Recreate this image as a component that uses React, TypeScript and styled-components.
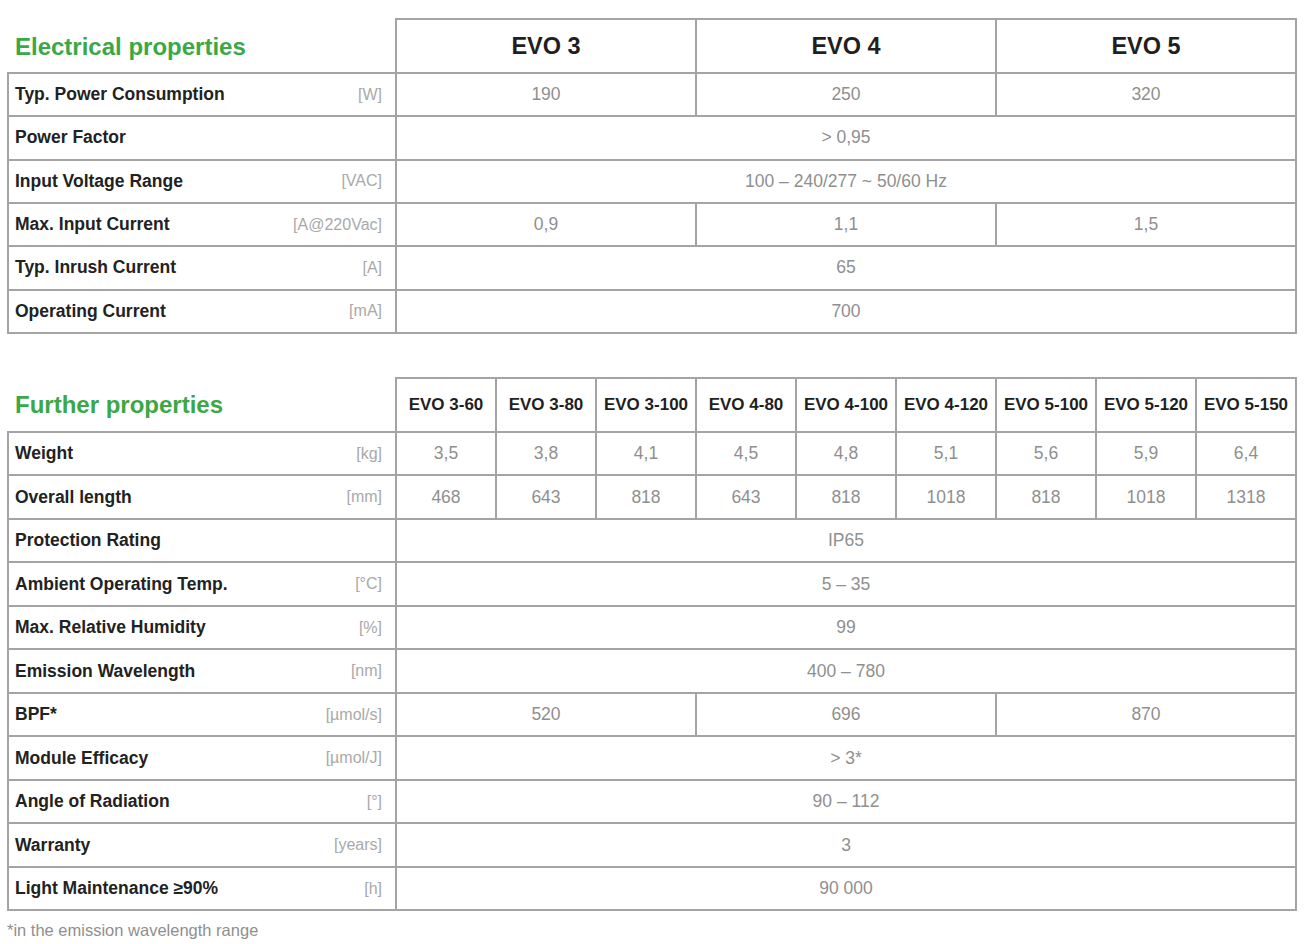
import React from "react";
import styled, { createGlobalStyle } from "styled-components";

const Global = createGlobalStyle`
  html, body { margin: 0; padding: 0; background: #ffffff; }
  body { font-family: "Liberation Sans", Arial, Helvetica, sans-serif; }
`;

const Page = styled.div`
  padding: 18px 0 0 7px;
  width: 1291px;
  display: flex;
  flex-direction: column;
`;

const Table = styled.table<{ $gap?: number }>`
  width: 1290px;
  table-layout: fixed;
  border-collapse: collapse;
  margin-top: ${(p) => p.$gap ?? 0}px;
`;

const HeadRow = styled.tr`
  height: 54px;
`;

const BodyRow = styled.tr<{ $h: number }>`
  height: ${(p) => p.$h}px;
`;

const Title = styled.th`
  border: none;
  text-align: left;
  padding: 2px 0 0 7px;
  font-size: 24px;
  font-weight: 700;
  color: #3ba846;
  vertical-align: middle;
  white-space: nowrap;
`;

const ColHead = styled.th<{ $small?: boolean }>`
  border: 2px solid #a4a4a4;
  text-align: center;
  vertical-align: middle;
  padding: 0;
  font-size: ${(p) => (p.$small ? 17 : 23.5)}px;
  font-weight: 700;
  color: #1f1f1f;
  white-space: nowrap;
`;

const LabelCell = styled.td`
  border: 2px solid #a4a4a4;
  padding: 0 13px 0 6px;
  vertical-align: middle;
`;

const LabelInner = styled.div`
  display: flex;
  justify-content: space-between;
  align-items: center;
`;

const Label = styled.span`
  font-size: 17.5px;
  font-weight: 700;
  color: #222222;
`;

const Unit = styled.span`
  font-size: 16px;
  color: #a9a9a9;
`;

const Value = styled.td`
  border: 2px solid #a4a4a4;
  text-align: center;
  vertical-align: middle;
  padding: 0;
  font-size: 17.5px;
  color: #8f8f8f;
`;

const Footnote = styled.div`
  margin-top: 10px;
  font-size: 16.5px;
  color: #8f8f8f;
`;

type Row = { label: string; unit: string; values: [string, number][] };

const electrical: Row[] = [
  { label: "Typ. Power Consumption", unit: "[W]", values: [["190", 1], ["250", 1], ["320", 1]] },
  { label: "Power Factor", unit: "", values: [["> 0,95", 3]] },
  { label: "Input Voltage Range", unit: "[VAC]", values: [["100 – 240/277 ~ 50/60 Hz", 3]] },
  { label: "Max. Input Current", unit: "[A@220Vac]", values: [["0,9", 1], ["1,1", 1], ["1,5", 1]] },
  { label: "Typ. Inrush Current", unit: "[A]", values: [["65", 3]] },
  { label: "Operating Current", unit: "[mA]", values: [["700", 3]] },
];

const further: Row[] = [
  {
    label: "Weight",
    unit: "[kg]",
    values: ["3,5", "3,8", "4,1", "4,5", "4,8", "5,1", "5,6", "5,9", "6,4"].map((v) => [v, 1] as [string, number]),
  },
  {
    label: "Overall length",
    unit: "[mm]",
    values: ["468", "643", "818", "643", "818", "1018", "818", "1018", "1318"].map((v) => [v, 1] as [string, number]),
  },
  { label: "Protection Rating", unit: "", values: [["IP65", 9]] },
  { label: "Ambient Operating Temp.", unit: "[°C]", values: [["5 – 35", 9]] },
  { label: "Max. Relative Humidity", unit: "[%]", values: [["99", 9]] },
  { label: "Emission Wavelength", unit: "[nm]", values: [["400 – 780", 9]] },
  { label: "BPF*", unit: "[µmol/s]", values: [["520", 3], ["696", 3], ["870", 3]] },
  { label: "Module Efficacy", unit: "[µmol/J]", values: [["> 3*", 9]] },
  { label: "Angle of Radiation", unit: "[°]", values: [["90 – 112", 9]] },
  { label: "Warranty", unit: "[years]", values: [["3", 9]] },
  { label: "Light Maintenance ≥90%", unit: "[h]", values: [["90 000", 9]] },
];

const models = ["EVO 3-60", "EVO 3-80", "EVO 3-100", "EVO 4-80", "EVO 4-100", "EVO 4-120", "EVO 5-100", "EVO 5-120", "EVO 5-150"];

function Rows({ rows, h }: { rows: Row[]; h: number }) {
  return (
    <>
      {rows.map((r) => (
        <BodyRow key={r.label} $h={h}>
          <LabelCell>
            <LabelInner>
              <Label>{r.label}</Label>
              <Unit>{r.unit}</Unit>
            </LabelInner>
          </LabelCell>
          {r.values.map(([v, span], i) => (
            <Value key={i} colSpan={span}>
              {v}
            </Value>
          ))}
        </BodyRow>
      ))}
    </>
  );
}

export default function App() {
  return (
    <Page>
      <Global />
      <Table>
        <colgroup>
          <col style={{ width: 388 }} />
          <col />
          <col />
          <col />
        </colgroup>
        <thead>
          <HeadRow>
            <Title>Electrical properties</Title>
            <ColHead>EVO 3</ColHead>
            <ColHead>EVO 4</ColHead>
            <ColHead>EVO 5</ColHead>
          </HeadRow>
        </thead>
        <tbody>
          <Rows rows={electrical} h={43.33} />
        </tbody>
      </Table>

      <Table $gap={43}>
        <colgroup>
          <col style={{ width: 388 }} />
          {models.map((m) => (
            <col key={m} />
          ))}
        </colgroup>
        <thead>
          <HeadRow>
            <Title>Further properties</Title>
            {models.map((m) => (
              <ColHead key={m} $small>
                {m}
              </ColHead>
            ))}
          </HeadRow>
        </thead>
        <tbody>
          <Rows rows={further} h={43.5} />
        </tbody>
      </Table>
      <Footnote>*in the emission wavelength range</Footnote>
    </Page>
  );
}
